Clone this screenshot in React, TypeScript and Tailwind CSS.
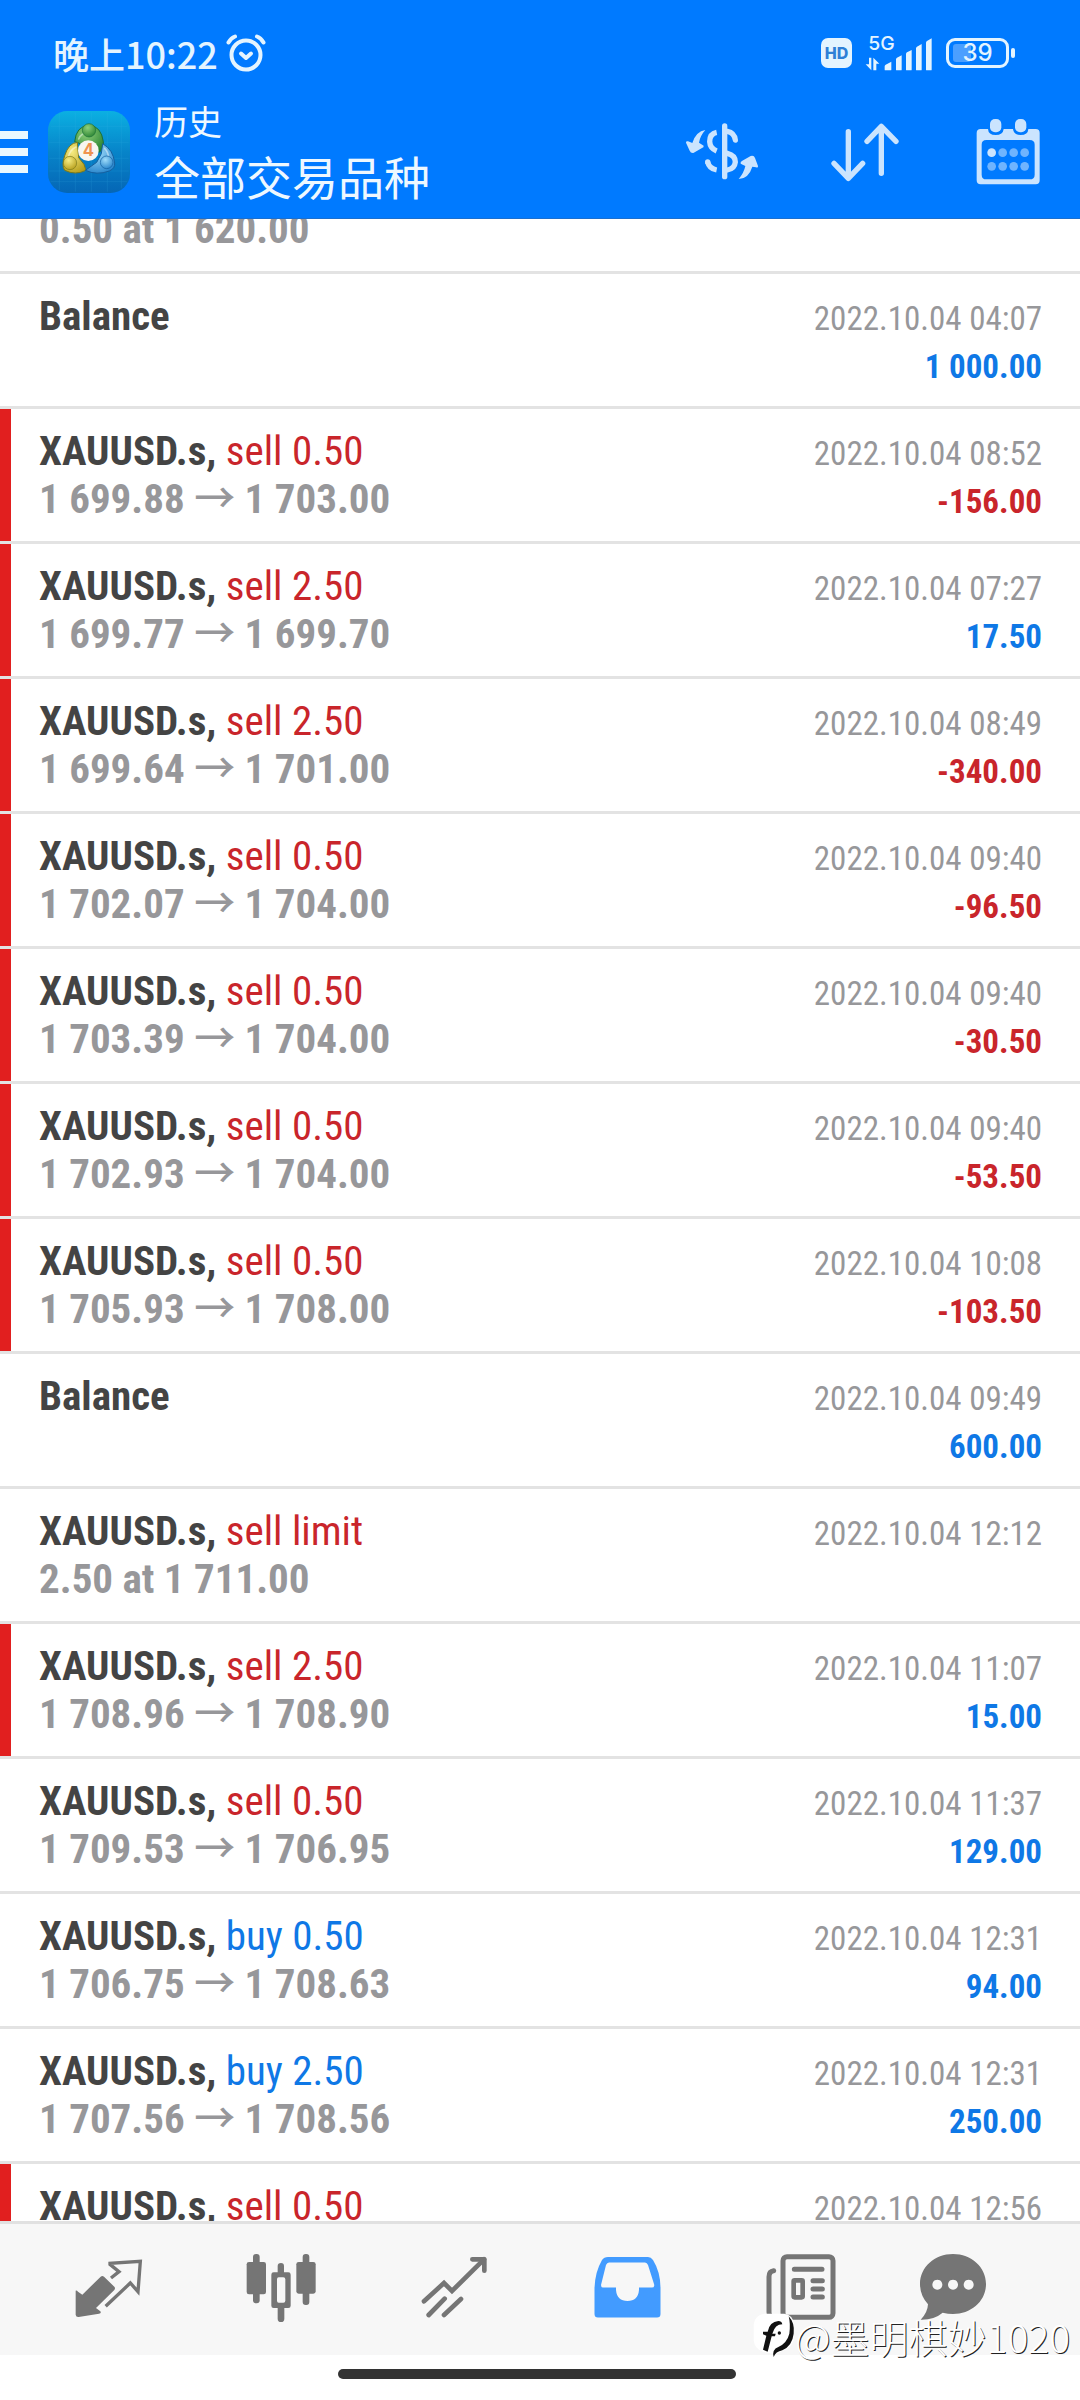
import { clsx } from "clsx";

type Side = "buy" | "sell";

type Deal = {
  side?: Side;
  order?: string;
  from?: string;
  to?: string;
  note?: string;
  time: string;
  profit?: string;
  marked?: boolean;
};

const deals: Deal[] = [
  { time: "2022.10.04 04:07", profit: "1 000.00" },
  { side: "sell", order: "0.50", from: "1 699.88", to: "1 703.00", time: "2022.10.04 08:52", profit: "-156.00", marked: true },
  { side: "sell", order: "2.50", from: "1 699.77", to: "1 699.70", time: "2022.10.04 07:27", profit: "17.50", marked: true },
  { side: "sell", order: "2.50", from: "1 699.64", to: "1 701.00", time: "2022.10.04 08:49", profit: "-340.00", marked: true },
  { side: "sell", order: "0.50", from: "1 702.07", to: "1 704.00", time: "2022.10.04 09:40", profit: "-96.50", marked: true },
  { side: "sell", order: "0.50", from: "1 703.39", to: "1 704.00", time: "2022.10.04 09:40", profit: "-30.50", marked: true },
  { side: "sell", order: "0.50", from: "1 702.93", to: "1 704.00", time: "2022.10.04 09:40", profit: "-53.50", marked: true },
  { side: "sell", order: "0.50", from: "1 705.93", to: "1 708.00", time: "2022.10.04 10:08", profit: "-103.50", marked: true },
  { time: "2022.10.04 09:49", profit: "600.00" },
  { side: "sell", order: "limit", note: "2.50 at 1 711.00", time: "2022.10.04 12:12" },
  { side: "sell", order: "2.50", from: "1 708.96", to: "1 708.90", time: "2022.10.04 11:07", profit: "15.00", marked: true },
  { side: "sell", order: "0.50", from: "1 709.53", to: "1 706.95", time: "2022.10.04 11:37", profit: "129.00" },
  { side: "buy", order: "0.50", from: "1 706.75", to: "1 708.63", time: "2022.10.04 12:31", profit: "94.00" },
  { side: "buy", order: "2.50", from: "1 707.56", to: "1 708.56", time: "2022.10.04 12:31", profit: "250.00" },
  { side: "sell", order: "0.50", time: "2022.10.04 12:56", marked: true },
];

function StatusBar() {
  return (
    <div className="flex h-24 items-center justify-between pt-[10px] pl-[53px] pr-[65px] text-[#e4f4ff]">
      <div className="flex items-center gap-2">
        <span className="text-[36px] leading-[48px] font-medium">晚上10:22</span>
        <svg width="40" height="38" viewBox="0 0 40 38" fill="none" stroke="currentColor" strokeWidth="4" strokeLinecap="round">
          <circle cx="20" cy="21" r="14.5" />
          <path d="M2.5 8.5 Q5 4 9 2.5M37.500 8.500 Q35 4 31 2.500" />
          <path d="M15 19.500l5 4.500 5-4.500" strokeLinejoin="round" />
        </svg>
      </div>
      <div className="flex items-center gap-[14px]">
        <span className="flex h-[30px] w-[31px] items-center justify-center rounded-[7px] bg-[#e4f4ff] font-[Inter] text-[16px] font-extrabold text-[#2f7fd6]">
          HD
        </span>
        <svg className="overflow-visible" width="66" height="36" viewBox="153 30 198 108" fill="currentColor">
          <text x="160" y="75" fontSize="58" fontFamily="Inter, sans-serif" fontWeight="500">5G</text>
          <path d="M162 98h7v38l-17-18h10zM175 136V98l18 18h-9v20z" />
          <path d="M209 134v-10q0-3 3-5l17-9v24q0 2-2 2h-16q-2 0-2-2zM243 134v-31q0-3 3-5l14-7v43q0 2-2 2h-13q-2 0-2-2zM273 134V87q0-3 3-5l14-7v59q0 2-2 2h-13q-2 0-2-2zM303 134V70q0-3 3-5l14-8v77q0 2-2 2h-13q-2 0-2-2zM333 134V53q0-3 3-5l14-8v94q0 2-2 2h-13q-2 0-2-2z" />
        </svg>
        <div className="flex items-center gap-[2px]">
          <div className="relative flex h-[30px] w-[63px] items-center justify-center rounded-[9px] border-3 border-current">
            <span className="absolute inset-y-[3px] left-1 w-[18px] rounded-[3px] bg-[#4b9fff]" />
            <span className="relative font-[Inter] text-[24px] leading-[24px] font-medium">39</span>
          </div>
          <span className="h-[10px] w-1 rounded-[2px] bg-current" />
        </div>
      </div>
    </div>
  );
}

function AppLogo() {
  return (
    <svg width="82" height="82" viewBox="0 0 246 246">
      <defs>
        <linearGradient id="tile" x1="0" y1="0" x2="0" y2="1">
          <stop offset="0" stopColor="#0bb0e2" />
          <stop offset="0.5" stopColor="#0784c9" />
          <stop offset="1" stopColor="#0566b5" />
        </linearGradient>
        <radialGradient id="green" cx="0.4" cy="0.3" r="0.8">
          <stop offset="0" stopColor="#8fd07a" />
          <stop offset="1" stopColor="#237f2e" />
        </radialGradient>
        <radialGradient id="gold" cx="0.4" cy="0.3" r="0.8">
          <stop offset="0" stopColor="#f6ec83" />
          <stop offset="1" stopColor="#b39a16" />
        </radialGradient>
        <radialGradient id="sky" cx="0.4" cy="0.3" r="0.8">
          <stop offset="0" stopColor="#9fdcfa" />
          <stop offset="1" stopColor="#1f7fc9" />
        </radialGradient>
      </defs>
      <rect width="246" height="246" rx="58" fill="url(#tile)" />
      <path d="M34 8v230M82 4v238M130 4v238M178 4v238M220 14v218M8 46h230M4 94h238M4 142h238M4 180h238M8 212h230" stroke="#3fb6e8" strokeWidth="1.500" opacity="0.3" />
      <path d="M80 92Q84 46 123 42Q160 46 166 92Q168 112 154 124L92 96Z" fill="url(#green)" stroke="#1b6f3a" strokeWidth="3" />
      <path d="M88 94Q62 96 50 134Q40 164 50 178Q82 194 114 178L108 160L92 140Z" fill="url(#gold)" stroke="#7c7a1c" strokeWidth="3" />
      <path d="M164 98Q196 116 200 156Q202 172 184 180Q146 194 112 178L146 154L160 128Z" fill="url(#sky)" stroke="#155f9e" strokeWidth="3" />
      <path d="M92 84Q98 66 123 64M62 136Q66 116 84 108M182 140Q180 122 170 112" fill="none" stroke="#ffffff" strokeWidth="5" opacity="0.45" strokeLinecap="round" />
      <circle cx="123" cy="58" r="20" fill="url(#green)" stroke="#1b6f3a" strokeWidth="2" />
      <circle cx="66" cy="156" r="20" fill="url(#gold)" stroke="#7c7a1c" strokeWidth="2" />
      <circle cx="176" cy="154" r="19" fill="url(#sky)" stroke="#155f9e" strokeWidth="2" />
      <circle cx="121" cy="119" r="31" fill="#f8f6f1" />
      <text x="121" y="136" textAnchor="middle" fontSize="50" fontWeight="700" fontFamily="Inter, sans-serif" fill="#ef9350">4</text>
    </svg>
  );
}

function Toolbar() {
  return (
    <div className="flex items-center justify-between pr-[34px] pb-[10px]">
      <div className="flex items-center">
        <button aria-label="菜单" className="flex w-7 flex-col gap-[9px]">
          <span className="h-2 w-full bg-[#eaf8ff]" />
          <span className="h-2 w-full bg-[#eaf8ff]" />
          <span className="h-2 w-full bg-[#eaf8ff]" />
        </button>
        <div className="ml-5">
          <AppLogo />
        </div>
        <div className="ml-6 pb-1 text-[#eef8ff]">
          <p className="text-[34px] leading-[50px]">历史</p>
          <h1 className="text-[46px] leading-[58px]">全部交易品种</h1>
        </div>
      </div>
      <div className="flex gap-[67px] text-[#cbe4fe]">
        <button aria-label="交易品种">
          <svg width="76" height="72" viewBox="12 18 228 216" fill="none" stroke="currentColor" strokeWidth="16" strokeLinecap="round">
            <path d="M134 48v152" />
            <path d="M142 64Q163 68 166 90M142 130Q166 136 166 156Q164 176 142 180" />
            <path d="M110 67Q89 71 89 95Q90 115 110 123M83 156Q88 176 110 180" strokeLinecap="butt" />
            <circle cx="83" cy="156" r="8" fill="currentColor" stroke="none" />
            <path d="M76 60Q60 78 57 98L71 107Q72 112 66 114L40 129Q32 130 29 122L18 98Q17 92 24 94L37 99Q48 64 76 60zM176 207Q192 188 196 168L182 161Q180 155 187 152L212 138Q222 135 225 144L234 168Q235 174 228 172L217 170Q206 206 176 207z" fill="currentColor" stroke="none" />
          </svg>
        </button>
        <button aria-label="排序">
          <svg width="76" height="72" viewBox="441 18 228 216" fill="none" stroke="currentColor" strokeWidth="16" strokeLinecap="round" strokeLinejoin="round">
            <path d="M505 65v140M462 160l43 45 43-45M604 190V49M561 94l43-45 44 45" />
          </svg>
        </button>
        <button aria-label="日期">
          <svg width="76" height="72" viewBox="871 18 228 216" fill="currentColor">
            <path fillRule="evenodd" d="M903 57H925Q926 75 948 75Q970 75 972 57H1000Q1002 75 1023 75Q1045 75 1046 57H1068Q1080 57 1080 69V211Q1080 223 1068 223H903Q891 223 891 211V69Q891 57 903 57zM920 90Q906 90 906 104V194Q906 208 920 208H1050Q1065 208 1065 194V104Q1065 90 1050 90z" />
            <rect x="931" y="27" width="34" height="40" rx="15" />
            <rect x="1006" y="27" width="34" height="40" rx="15" />
            <circle cx="936" cy="128" r="13" />
            <g opacity="0.55">
              <circle cx="969" cy="128" r="13" />
              <circle cx="1002" cy="128" r="13" />
              <circle cx="1035" cy="128" r="13" />
              <circle cx="936" cy="169" r="13" />
              <circle cx="969" cy="169" r="13" />
              <circle cx="1002" cy="169" r="13" />
              <circle cx="1035" cy="169" r="13" />
            </g>
          </svg>
        </button>
      </div>
    </div>
  );
}

function DealRow({ deal }: { deal: Deal }) {
  return (
    <li className="shrink-0 border-b-3 border-[#e3e3e3] bg-white">
      <div className={clsx("border-l-11 py-[18px] pr-[38px] pl-7", deal.marked ? "border-[#e11f1f]" : "border-transparent")}>
        <div className="flex h-12 items-baseline justify-between leading-[48px]">
          <p className="text-[41px]">
            {deal.side ? (
              <>
                <b className="text-[#444]">XAUUSD.s,</b>{" "}
                <span className={deal.side === "buy" ? "text-[#0f78e6]" : "text-[#c9252b]"}>
                  {deal.side} {deal.order}
                </span>
              </>
            ) : (
              <b className="text-[#444]">Balance</b>
            )}
          </p>
          <time className="text-[33px] text-[#97979a]">{deal.time}</time>
        </div>
        <div className="flex h-12 items-baseline justify-between leading-[48px] font-bold">
          <p className="text-[41px] text-[#97979a]">
            {deal.from ? (
              <>
                {deal.from} <span className="font-['Noto_Sans_CJK_SC'] leading-[24px] font-medium">→</span> {deal.to}
              </>
            ) : (
              deal.note ?? "\u00a0"
            )}
          </p>
          {deal.profit && (
            <p className={clsx("text-[33px]", deal.profit.startsWith("-") ? "text-[#c9252b]" : "text-[#0f78e6]")}>
              {deal.profit}
            </p>
          )}
        </div>
      </div>
    </li>
  );
}

function BottomNav() {
  return (
    <nav className="grid h-[134px] shrink-0 grid-cols-[173fr_173fr_173fr_173fr_173fr_131fr] items-center justify-items-center border-t-3 border-[#e1e1e1] bg-[#f7f7f7] pr-[63px] pl-[21px] text-[#757575]">
      <button aria-label="行情">
        <svg width="76" height="76" viewBox="30 36 228 228" fill="currentColor">
          <path d="M47 152Q50 150 54 155L67 164L122 110Q127 106 132 110L163 140Q167 145 163 150L108 204L121 214Q125 220 117 221L56 231Q48 232 47 224z" />
          <path d="M153 114L177 95L150 73V70L241 64L234 155L211 129L137 199" fill="none" stroke="currentColor" strokeWidth="10" />
        </svg>
      </button>
      <button aria-label="图表">
        <svg width="76" height="76" viewBox="549 36 228 228" fill="currentColor">
          <rect x="579" y="42" width="20" height="148" rx="9" />
          <rect x="560" y="66" width="58" height="97" rx="7" />
          <rect x="728" y="42" width="20" height="153" rx="9" />
          <rect x="709" y="66" width="58" height="95" rx="7" />
          <path fillRule="evenodd" d="M653 97V78Q653 69 663 69Q672 69 672 78V97H685Q692 97 692 104V197Q692 204 685 204H673V236Q673 246 663 246Q653 246 653 236V204H641Q634 204 634 197V104Q634 97 641 97zM656 112Q651 112 651 118V182Q651 188 656 188H670Q676 188 676 182V118Q676 112 670 112z" />
        </svg>
      </button>
      <button aria-label="交易">
        <svg width="76" height="76" viewBox="1068 36 228 228" fill="none" stroke="currentColor" strokeWidth="14">
          <path d="M1092 184L1152 129L1176 153L1272 58M1106 225L1154 176M1152 225L1203 177" strokeLinecap="round" />
          <path d="M1237 58H1273V92" strokeLinecap="round" strokeLinejoin="round" />
        </svg>
      </button>
      <button aria-label="历史" className="text-[#429bff]">
        <svg width="76" height="76" viewBox="0 0 76 76" fill="currentColor">
          <path fillRule="evenodd" d="M19 5H59Q62 5 64 8Q71.500 20 71.500 36V62Q71.500 65.500 68 65.500H9Q5.500 65.500 5.500 62V36Q6 20 13 8Q15 5 19 5zM20 10.500Q18 10.500 17 13L12 33Q12 35.500 14 35.500H27V38Q28 49 38.500 49Q49 49 50 38V35.500H63Q66 35.500 65 32L59 13Q58 10.500 56 10.500z" />
        </svg>
      </button>
      <button aria-label="新闻">
        <svg width="76" height="76" viewBox="66 36 228 228" fill="none" stroke="currentColor" strokeWidth="15" strokeLinecap="round">
          <rect x="129" y="50" width="150" height="182" rx="12" />
          <path d="M101 92Q87 94 87 110V216Q87 232 101 232H130" />
          <path d="M163 88h83M219 122h28M219 147h28M219 171h28" />
          <rect x="161" y="121" width="27" height="51" rx="3" strokeWidth="14" />
        </svg>
      </button>
      <button aria-label="消息">
        <svg width="76" height="76" viewBox="522 36 228 228" fill="currentColor">
          <path fillRule="evenodd" d="M639 42C694 42 738 81 738 132C738 183 694 222 639 222Q624 222 608 218Q582 240 542 239Q563 218 564 193Q540 166 540 132C540 81 584 42 639 42zM592 119a15 15 0 1 0 0.100 0zM639 119a15 15 0 1 0 0.100 0zM686 119a15 15 0 1 0 0.100 0z" />
        </svg>
      </button>
    </nav>
  );
}

function Watermark() {
  return (
    <div className="absolute right-[10px] bottom-[40px] flex items-center text-white">
      <svg width="42" height="46" viewBox="36 238 126 138">
        <path d="M70 240H130Q158 244 158 272V320Q150 344 128 350L104 362L66 354Q40 346 38 320V272Q42 244 70 240z" fill="#fff" />
        <path d="M66 302V294H80Q86 264 112 262Q122 262 124 272Q102 272 94 300H104L102 308H92L80 354L66 348L76 306z" fill="#111" />
        <path d="M143 248Q162 268 158 300Q154 336 124 350Q104 354 98 370Q92 348 112 340Q138 328 145 300Q149 270 143 248z" fill="#111" />
        <circle cx="115" cy="298" r="5" fill="#111" />
      </svg>
      <span className="text-[39px] leading-[48px] font-light text-shadow-[1px_1px_0_#222]">@墨明棋妙1020</span>
    </div>
  );
}

export default function App() {
  return (
    <div className="relative flex h-screen flex-col overflow-hidden bg-white font-['Noto_Sans_CJK_SC',sans-serif]">
      <header className="shrink-0 border-b border-[#1a6fd0] bg-[#007aff]">
        <StatusBar />
        <Toolbar />
      </header>
      <ul className="flex min-h-0 flex-1 flex-col overflow-hidden font-['Roboto_Condensed',Roboto,sans-serif]">
        {/* row that is scrolled half under the header */}
        <li className="flex h-[55px] shrink-0 items-end overflow-hidden border-b-3 border-[#e3e3e3] pb-[18px] pl-[39px]">
          <p className="text-[41px] leading-[48px] font-bold text-[#97979a]">0.50 at 1 620.00</p>
        </li>
        {deals.map((deal, i) => (
          <DealRow key={i} deal={deal} />
        ))}
      </ul>
      <BottomNav />
      <div className="flex h-[45px] shrink-0 items-start justify-center pt-[14px] pr-[6px]">
        <span className="h-[10px] w-[37%] rounded-full bg-[#333]" />
      </div>
      <Watermark />
    </div>
  );
}
